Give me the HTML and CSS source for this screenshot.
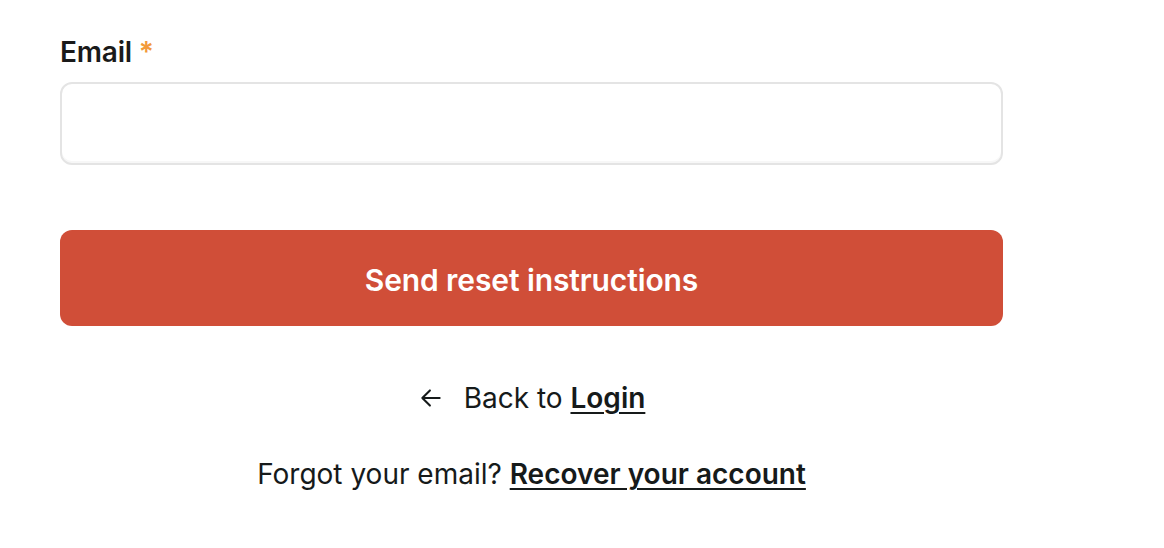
FILE: index.html
```html
<!DOCTYPE html>
<html lang="en">
<head>
<meta charset="utf-8">
<title>Reset password</title>
<link rel="stylesheet" href="styles.css">
</head>
<body>
<form class="form">
  <label class="label" for="email">Email <span class="req">*</span></label>
  <input class="input" id="email" type="email">
  <button class="btn" type="button">Send reset instructions</button>
  <div class="back">
    <svg class="arrow" width="24" height="24" viewBox="0 0 24 24" fill="none" stroke="currentColor" stroke-width="1.9" stroke-linecap="round" stroke-linejoin="round"><path d="M20 12H4M11 5l-7 7 7 7"/></svg>
    <span>Back to <a href="#" class="link">Login</a></span>
  </div>
  <p class="forgot">Forgot your email? <a href="#" class="link">Recover your account</a></p>
</form>
</body>
</html>
```
FILE: styles.css
```css
html, body {
  margin: 0;
  background: #ffffff;
}
body {
  font-family: Inter, "Noto Sans", sans-serif;
  color: #161a1a;
}
.form {
  width: 943px;
  padding: 34px 0 0 60px;
  display: flex;
  flex-direction: column;
}
.label {
  font-size: 28px;
  font-weight: 600;
  line-height: 36px;
  color: #1a1a1a;
  letter-spacing: -0.2px;
}
.req {
  color: #f29a3a;
}
.input {
  margin-top: 12px;
  height: 83px;
  box-sizing: border-box;
  border: 2px solid #e4e4e4;
  border-radius: 12px;
  background: #fff;
  box-shadow: inset 0 -2px 0 rgba(0,0,0,0.03);
  outline: none;
}
.btn {
  margin-top: 65px;
  height: 96px;
  padding-top: 4px;
  border: none;
  border-radius: 12px;
  background: #d04e38;
  color: #fff;
  font-family: inherit;
  font-size: 30px;
  font-weight: 600;
  letter-spacing: -0.1px;
}
.back {
  margin-top: 52px;
  display: flex;
  justify-content: center;
  align-items: center;
  gap: 20px;
  font-size: 28px;
  line-height: 40px;
}
.arrow {
  width: 26px;
  height: 26px;
}
.link {
  color: #161a1a;
  font-weight: 600;
  text-decoration: underline;
  text-decoration-thickness: 2px;
  text-underline-offset: 4px;
}
.forgot {
  margin: 36px 0 0;
  text-align: center;
  font-size: 28px;
  line-height: 40px;
}
```
